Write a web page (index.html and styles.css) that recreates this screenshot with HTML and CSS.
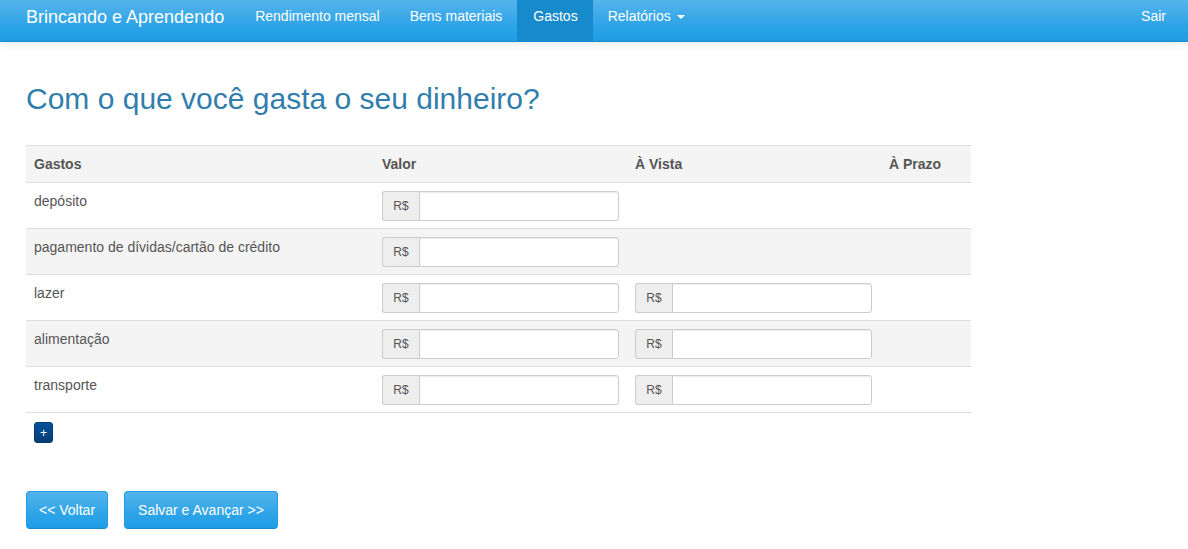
FILE: index.html
```html
<!DOCTYPE html>
<html lang="pt-BR">
<head>
<meta charset="utf-8">
<title>Gastos</title>
<link rel="stylesheet" href="styles.css">
</head>
<body>
<nav class="navbar">
  <a class="brand" href="#">Brincando e Aprendendo</a>
  <ul class="nav">
    <li><a href="#">Rendimento mensal</a></li>
    <li><a href="#">Bens materiais</a></li>
    <li class="active"><a href="#">Gastos</a></li>
    <li><a href="#">Relatórios <span class="caret"></span></a></li>
  </ul>
  <ul class="nav nav-right">
    <li><a href="#">Sair</a></li>
  </ul>
</nav>

<main class="content">
  <h2 class="title">Com o que você gasta o seu dinheiro?</h2>

  <table class="table">
    <thead>
      <tr>
        <th class="c1">Gastos</th>
        <th class="c2">Valor</th>
        <th class="c3">À Vista</th>
        <th class="c4">À Prazo</th>
      </tr>
    </thead>
    <tbody>
      <tr>
        <td>depósito</td>
        <td><div class="igroup"><span class="addon">R$</span><input class="field" type="text"></div></td>
        <td></td>
        <td></td>
      </tr>
      <tr class="striped">
        <td>pagamento de dívidas/cartão de crédito</td>
        <td><div class="igroup"><span class="addon">R$</span><input class="field" type="text"></div></td>
        <td></td>
        <td></td>
      </tr>
      <tr>
        <td>lazer</td>
        <td><div class="igroup"><span class="addon">R$</span><input class="field" type="text"></div></td>
        <td><div class="igroup"><span class="addon">R$</span><input class="field" type="text"></div></td>
        <td></td>
      </tr>
      <tr class="striped">
        <td>alimentação</td>
        <td><div class="igroup"><span class="addon">R$</span><input class="field" type="text"></div></td>
        <td><div class="igroup"><span class="addon">R$</span><input class="field" type="text"></div></td>
        <td></td>
      </tr>
      <tr>
        <td>transporte</td>
        <td><div class="igroup"><span class="addon">R$</span><input class="field" type="text"></div></td>
        <td><div class="igroup"><span class="addon">R$</span><input class="field" type="text"></div></td>
        <td></td>
      </tr>
    </tbody>
  </table>

  <div class="add-row"><button class="btn-add" type="button">+</button></div>

  <div class="actions">
    <button class="btn" type="button">&lt;&lt; Voltar</button>
    <button class="btn btn-wide" type="button">Salvar e Avançar &gt;&gt;</button>
  </div>
</main>
</body>
</html>
```

FILE: styles.css
```css
* { box-sizing: border-box; }

body {
  margin: 0;
  background: #fff;
  font-family: "Liberation Sans", Arial, Helvetica, sans-serif;
  font-size: 14px;
  line-height: 20px;
  color: #555;
}

.navbar {
  display: flex;
  align-items: stretch;
  height: 42px;
  padding: 0 7px 0 11px;
  background-image: linear-gradient(#54b4eb, #2fa4e7 60%, #1d9ce5);
  border-bottom: 1px solid #178acc;
  box-shadow: 0 1px 10px rgba(0, 0, 0, 0.1);
}

.navbar a {
  color: #fff;
  text-decoration: none;
}

.brand {
  font-size: 18px;
  line-height: 20px;
  padding: 7px 16px 0 15px;
}

.nav {
  display: flex;
  list-style: none;
  margin: 0;
  padding: 0;
}

.nav li a {
  display: block;
  height: 41px;
  padding: 6px 15px 0;
  line-height: 20px;
}

.nav li.active a {
  background: #178acc;
  padding-left: 16px;
}

.nav-right {
  margin-left: auto;
}

.caret {
  display: inline-block;
  width: 0;
  height: 0;
  margin-left: 2px;
  vertical-align: middle;
  border-top: 4px solid #fff;
  border-left: 4px solid transparent;
  border-right: 4px solid transparent;
}

.content {
  padding: 0 26px;
}

.title {
  margin: 40px 0 30px;
  font-size: 30px;
  line-height: 33px;
  font-weight: 400;
  color: #317eac;
}

.table {
  width: 945px;
  border-collapse: collapse;
  border-spacing: 0;
}

.table th,
.table td {
  text-align: left;
  vertical-align: top;
  border-top: 1px solid #ddd;
}

.table th {
  padding: 8px;
  font-weight: 700;
  background: #f4f4f4;
}

.table td {
  padding: 8px 8px 7px;
}

.table tbody tr:last-child td {
  border-bottom: 1px solid #ddd;
}

.table tr.striped td {
  background: #f4f4f4;
}

.c1 { width: 348px; }
.c2 { width: 253px; }
.c3 { width: 254px; }
.c4 { width: 90px; }

.igroup {
  display: flex;
  width: 237px;
  height: 30px;
}

.addon {
  display: flex;
  align-items: center;
  justify-content: center;
  width: 37px;
  font-size: 12px;
  color: #555;
  background: #eee;
  border: 1px solid #ccc;
  border-right: 0;
  border-radius: 3px 0 0 3px;
}

.field {
  flex: 1;
  min-width: 0;
  height: 30px;
  margin: 0;
  padding: 5px 10px;
  font: 12px "Liberation Sans", Arial, sans-serif;
  border: 1px solid #ccc;
  border-radius: 0 3px 3px 0;
  box-shadow: inset 0 1px 1px rgba(0, 0, 0, 0.075);
  background: #fff;
}

.add-row {
  padding: 9px 8px 0;
}

.btn-add {
  display: block;
  width: 19px;
  height: 21px;
  padding: 0;
  font: 12px/18px "Liberation Sans", Arial, sans-serif;
  color: #fff;
  background-image: linear-gradient(#04519b, #044687 60%, #033c73);
  border: 1px solid #033c73;
  border-radius: 3px;
}

.actions {
  display: flex;
  gap: 16px;
  margin-top: 48px;
}

.btn {
  height: 38px;
  padding: 8px 12px;
  font: 14px/20px "Liberation Sans", Arial, sans-serif;
  color: #fff;
  background-image: linear-gradient(#54b4eb, #2fa4e7 60%, #1d9ce5);
  border: 1px solid #1f9ce5;
  border-bottom-color: #178acc;
  border-radius: 4px;
}

.btn-wide {
  padding: 8px 13px;
}
```
